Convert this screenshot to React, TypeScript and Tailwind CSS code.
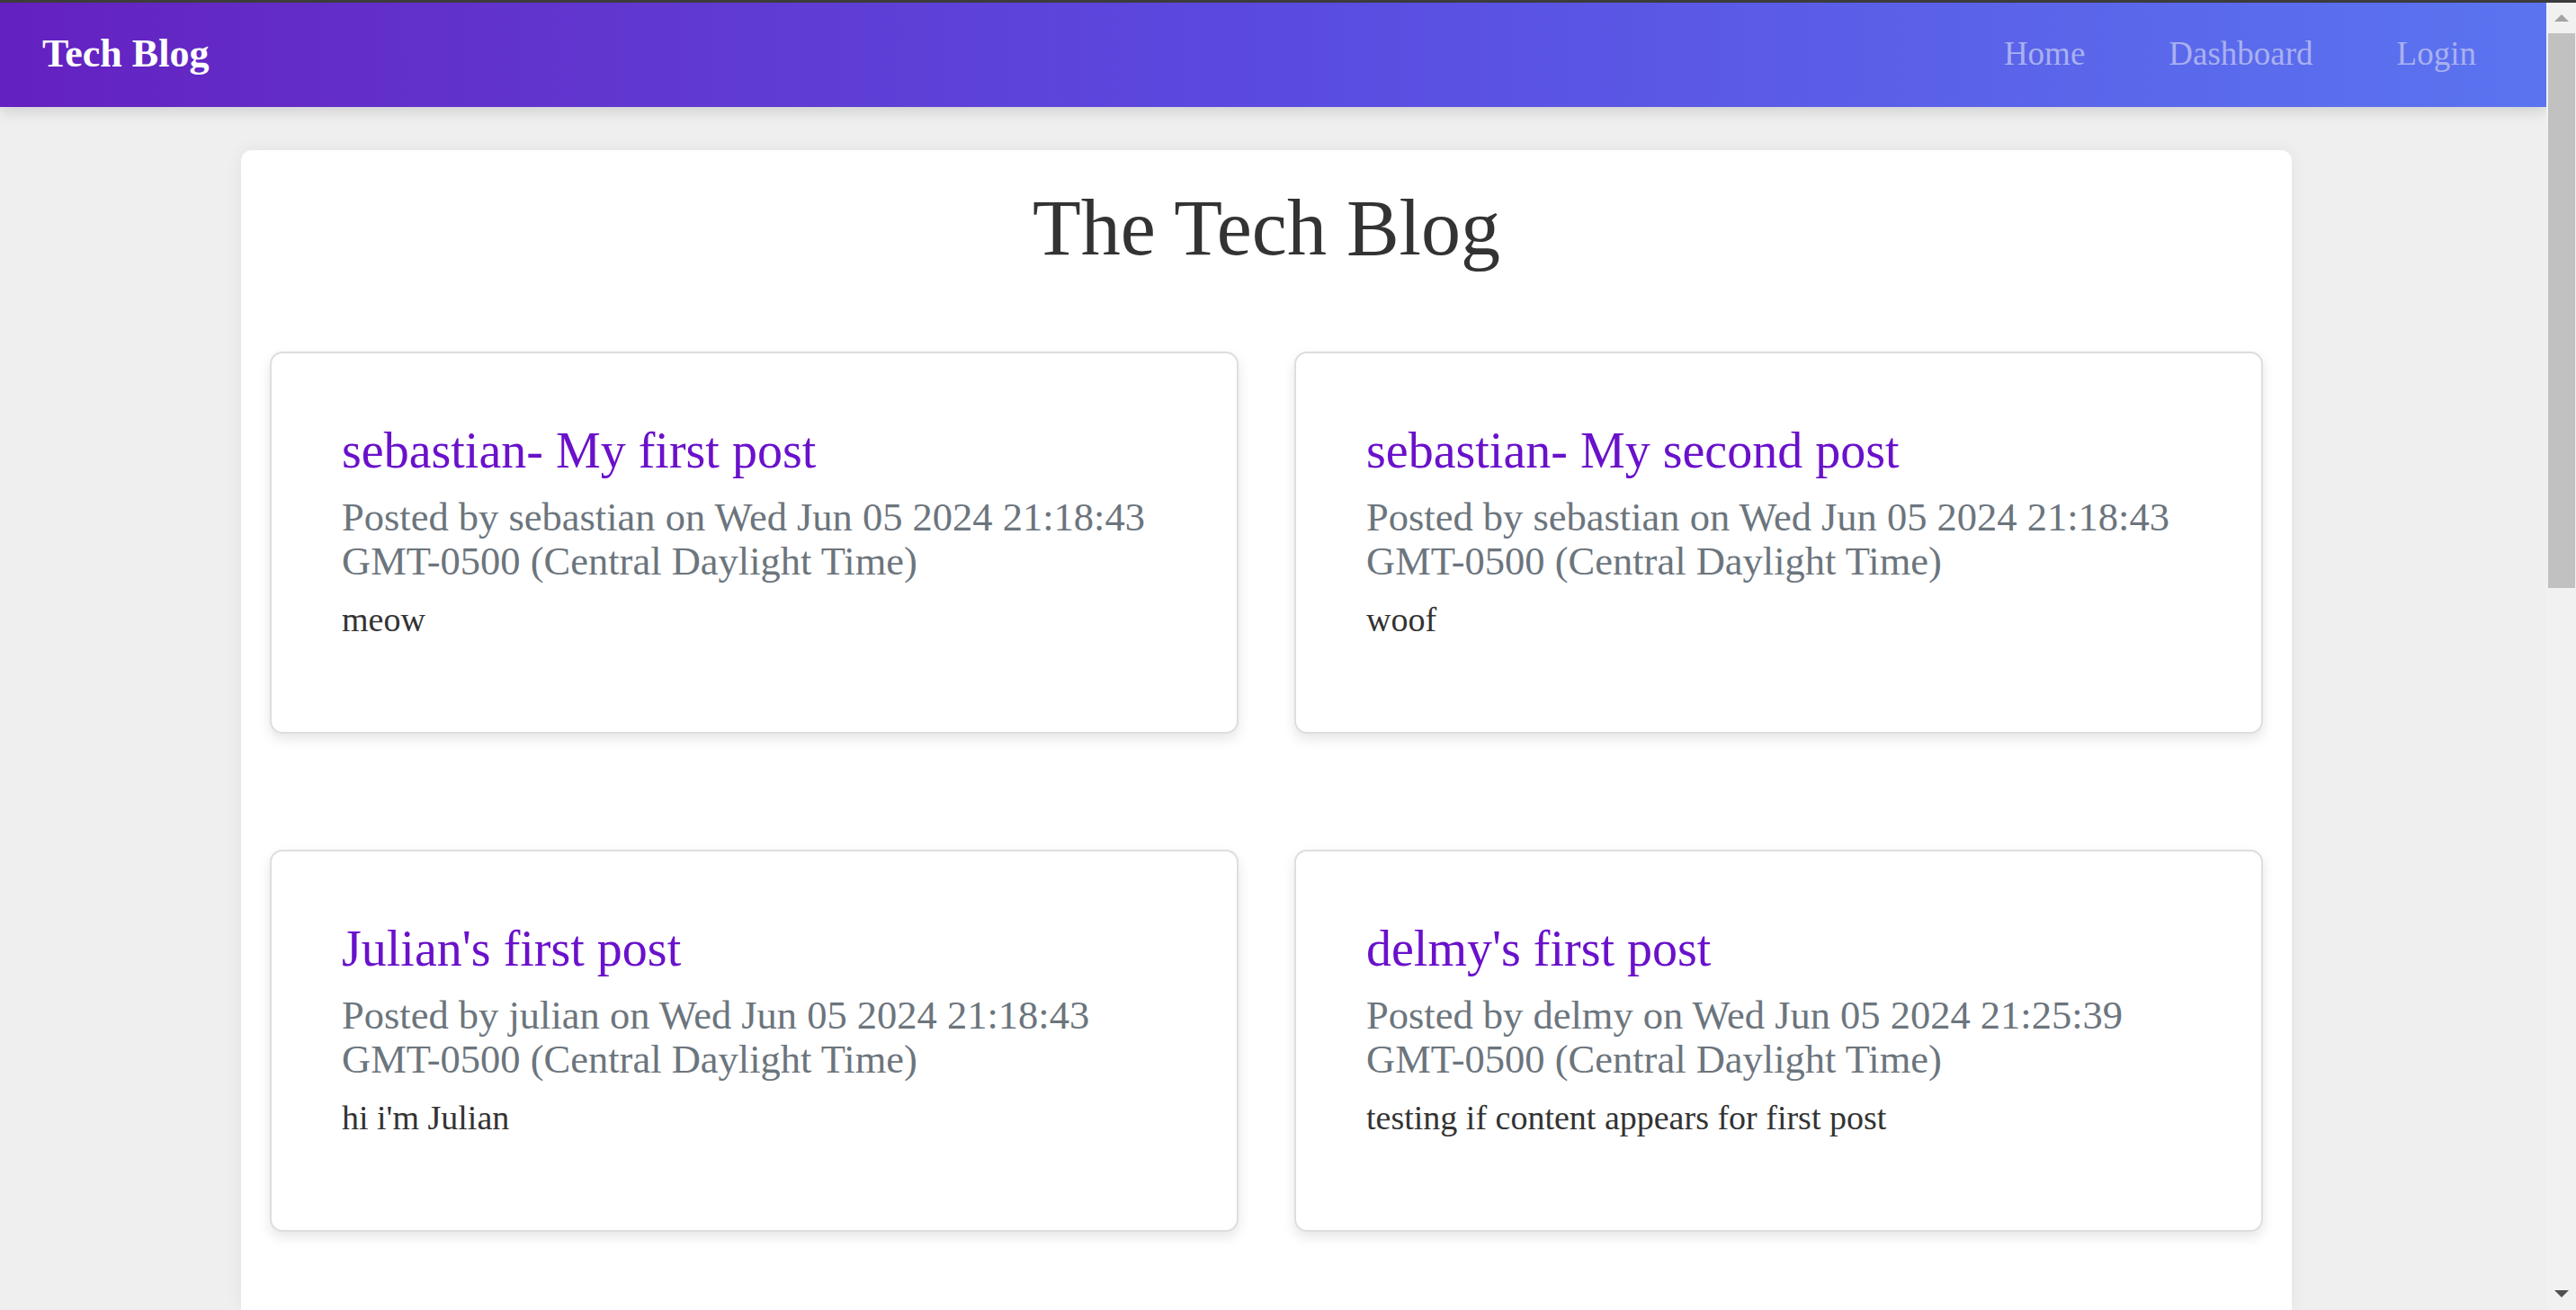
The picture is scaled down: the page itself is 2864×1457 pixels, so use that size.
import React from 'react';

type Post = {
  id: number;
  title: string;
  author: string;
  date: string;
  tz: string;
  body: string;
};

const posts: Post[] = [
  { id: 1, title: 'sebastian- My first post', author: 'sebastian', date: 'Wed Jun 05 2024 21:18:43', tz: 'GMT-0500 (Central Daylight Time)', body: 'meow' },
  { id: 2, title: 'sebastian- My second post', author: 'sebastian', date: 'Wed Jun 05 2024 21:18:43', tz: 'GMT-0500 (Central Daylight Time)', body: 'woof' },
  { id: 3, title: "Julian's first post", author: 'julian', date: 'Wed Jun 05 2024 21:18:43', tz: 'GMT-0500 (Central Daylight Time)', body: "hi i'm Julian" },
  { id: 4, title: "delmy's first post", author: 'delmy', date: 'Wed Jun 05 2024 21:25:39', tz: 'GMT-0500 (Central Daylight Time)', body: 'testing if content appears for first post' },
];

const PostCard: React.FC<{ post: Post }> = ({ post }) => (
  <div className="bg-white border-2 border-[#dedede] rounded-[14px] shadow-[0_6px_14px_rgba(0,0,0,0.10)] pl-[78px] pr-[78px] pt-[75px] pb-[102px]">
    <h2 className="text-[56px] leading-[67px] text-[#6a11cb]">{post.title}</h2>
    <p className="mt-[16px] text-[44.5px] leading-[49px] text-[#6c757d]">
      <span>{`Posted by ${post.author} on ${post.date}`}</span> <span>{post.tz}</span>
    </p>
    <p className="mt-[17px] text-[38px] leading-[46px] text-[#333]">{post.body}</p>
  </div>
);

const Scrollbar: React.FC = () => (
  <div className="w-[33px] shrink-0 flex flex-col bg-[#f1f1f1]">
    <div className="h-[34px] flex items-center justify-center">
      <div className="w-0 h-0 border-l-[8px] border-r-[8px] border-b-[8px] border-l-transparent border-r-transparent border-b-[#a3a3a3]" />
    </div>
    <div className="h-[617px] ml-[2px] mr-[1px] bg-[#c1c1c1]" />
    <div className="flex-1" />
    <div className="h-[22px] flex items-start justify-center">
      <div className="w-0 h-0 border-l-[8px] border-r-[8px] border-t-[8px] border-l-transparent border-r-transparent border-t-[#505050]" />
    </div>
  </div>
);

const App: React.FC = () => {
  return (
    <div className="h-[1457px] overflow-hidden flex flex-col bg-[#efefef] font-['Liberation_Serif',serif]">
      <div className="h-[3px] shrink-0 bg-[#3c3c3c]" />
      <div className="flex flex-1 min-h-0">
        <div className="flex-1 min-w-0 flex flex-col overflow-hidden">
          <nav className="relative z-10 h-[116px] shrink-0 flex items-center justify-between pl-[47px] pr-[78px] pb-[3px] bg-gradient-to-r from-[#6420c0] via-[#5a4ae0] to-[#5a74f0] shadow-[0_6px_14px_rgba(0,0,0,0.12)]">
            <a className="text-[44px] font-bold text-white">Tech Blog</a>
            <div className="flex items-center gap-[93px] text-[37px] text-[#a9b0f0]">
              <a>Home</a>
              <a>Dashboard</a>
              <a>Login</a>
            </div>
          </nav>
          <main className="ml-[268px] mt-[48px] w-[2280px] flex-1 bg-white rounded-t-[12px] shadow-[0_0_20px_rgba(0,0,0,0.06)] px-[32px] pt-[34px]">
            <h1 className="text-center text-[88px] leading-[105px] text-[#333]">The Tech Blog</h1>
            <div className="mt-[85px] grid grid-cols-2 gap-x-[62px] gap-y-[129px]">
              {posts.map((p) => (
                <PostCard key={p.id} post={p} />
              ))}
            </div>
          </main>
        </div>
        <Scrollbar />
      </div>
    </div>
  );
};

export default App;
